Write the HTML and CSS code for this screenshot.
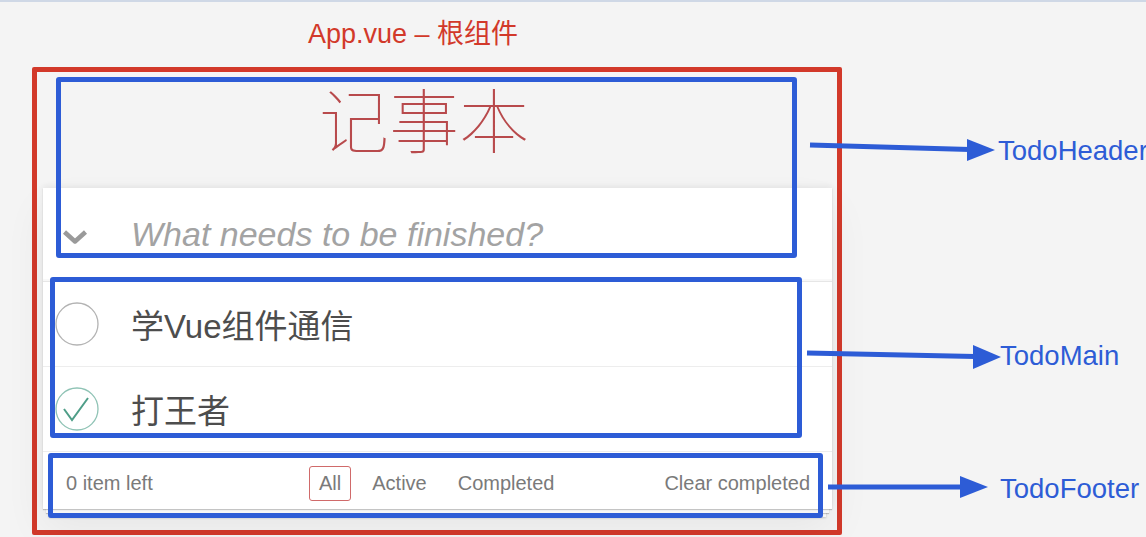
FILE: index.html
```html
<!DOCTYPE html>
<html lang="zh-CN">
<head>
  <meta charset="UTF-8">
  <meta name="viewport" content="width=device-width, initial-scale=1.0">
  <title>App.vue – 根组件</title>
  <link rel="stylesheet" href="styles.css">
</head>
<body>
  <div class="diagram">
    <div class="topline"></div>
    <div class="root-label">App.vue – 根组件</div>

    <div class="app-frame">
      <header class="todo-header">
        <h1>记事本</h1>
      </header>

      <section class="todoapp">
        <div class="new-row">
          <svg class="toggle-all" width="26" height="16" viewBox="0 0 26 16">
            <polyline points="2.5,3 13,12.5 23.5,3" fill="none" stroke="#9a9a9a" stroke-width="4.5" stroke-linejoin="round"/>
          </svg>
          <input class="new-todo" placeholder="What needs to be finished?">
        </div>

        <ul class="todo-list">
          <li>
            <svg class="check" width="44" height="44" viewBox="0 0 44 44">
              <circle cx="22" cy="22" r="21" fill="none" stroke="#b3b3b3" stroke-width="1.3"/>
            </svg>
            <label>学Vue组件通信</label>
          </li>
          <li class="completed">
            <svg class="check" width="44" height="44" viewBox="0 0 44 44">
              <circle cx="22" cy="22" r="21" fill="none" stroke="#8fc3b5" stroke-width="1.3"/>
              <polyline points="9,22 17,33 33,11" fill="none" stroke="#4f9e88" stroke-width="2"/>
            </svg>
            <label>打王者</label>
          </li>
        </ul>

        <footer class="footer">
          <span class="count">0 item left</span>
          <ul class="filters">
            <li><a class="selected">All</a></li>
            <li><a>Active</a></li>
            <li><a>Completed</a></li>
          </ul>
          <button class="clear">Clear completed</button>
        </footer>
      </section>
    </div>

    <!-- component annotations -->
    <div class="mark mark-header"></div>
    <div class="mark mark-main"></div>
    <div class="mark mark-footer"></div>

    <svg class="arrows" width="1146" height="537" viewBox="0 0 1146 537">
      <g fill="#2d5cd6" stroke="#2d5cd6">
        <line x1="810" y1="145" x2="970" y2="149.5" stroke-width="5"/>
        <polygon points="967,139 995,150 967,161" stroke="none"/>
        <line x1="807" y1="353" x2="975" y2="356.5" stroke-width="5"/>
        <polygon points="973,345 1001,357 973,369" stroke="none"/>
        <line x1="828" y1="487" x2="962" y2="487" stroke-width="5"/>
        <polygon points="960,476 988,487 960,498" stroke="none"/>
      </g>
    </svg>

    <span class="tag tag-header">TodoHeader</span>
    <span class="tag tag-main">TodoMain</span>
    <span class="tag tag-footer">TodoFooter</span>
  </div>
</body>
</html>
```

FILE: styles.css
```css
body {
  margin: 0;
  background-color: #f4f4f4;
  font-family: "Liberation Sans", "Noto Sans CJK SC", sans-serif;
}
.diagram {
  position: relative;
  width: 1146px;
  height: 537px;
  overflow: hidden;
}
.topline {
  height: 2px;
  background-color: #cfd8e6;
}
.root-label {
  height: 46px;
  padding: 19px 0 0 308px;
  font-size: 27px;
  line-height: 27px;
  color: #d2392a;
}

/* red frame = App.vue */
.app-frame {
  box-sizing: border-box;
  width: 810px;
  height: 468px;
  margin-left: 32px;
  padding: 0 5px 0 6px;
  border: 5px solid #d2392a;
  border-radius: 2px;
}
.todo-header {
  height: 116px;
}
.todo-header h1 {
  margin: 0;
  padding: 11px 27px 0 0;
  text-align: center;
  font-family: "Noto Sans CJK SC", sans-serif;
  font-size: 70px;
  font-weight: 100;
  line-height: 70px;
  color: #b84a4c;
}

.todoapp {
  background-color: #fff;
  box-shadow: 0 1px 1px rgba(0, 0, 0, 0.2),
              0 7px 0 -3px #f6f6f6,
              0 8px 1px -3px rgba(0, 0, 0, 0.2),
              0 14px 0 -6px #f6f6f6,
              0 15px 2px -6px rgba(0, 0, 0, 0.2),
              0 -2px 6px rgba(0, 0, 0, 0.06),
              0 20px 40px rgba(0, 0, 0, 0.06);
}
.new-row {
  display: flex;
  align-items: center;
  height: 93px;
  border-bottom: 1px solid #e6e6e6;
  box-shadow: inset 0 -2px 1px rgba(0, 0, 0, 0.03);
}
.toggle-all {
  margin: 4px 43px 0 19px;
}
.new-todo {
  flex: 1;
  border: none;
  outline: none;
  background: transparent;
  padding: 0;
  font-family: inherit;
  font-size: 34px;
  font-style: italic;
  color: #4d4d4d;
}
.new-todo::placeholder {
  color: #a3a3a3;
}

.todo-list {
  margin: 0;
  padding: 0;
  list-style: none;
}
.todo-list li {
  display: flex;
  align-items: center;
  height: 84px;
  border-bottom: 1px solid #ededed;
}
.todo-list .check {
  margin: 0 32px 0 12px;
}
.todo-list label {
  font-size: 33px;
  color: #4d4d4d;
}

.footer {
  display: flex;
  align-items: center;
  box-sizing: border-box;
  height: 57px;
  padding: 5px 22px 0 23px;
  font-size: 20px;
  color: #7a7a7a;
}
.count {
  width: 243px;
}
.filters {
  display: flex;
  margin: 0;
  padding: 0;
  list-style: none;
}
.filters a {
  display: block;
  margin-right: 11px;
  padding: 6px 9px;
  line-height: 21px;
  border: 1px solid transparent;
  border-radius: 3px;
}
.filters a.selected {
  border-color: #d06a6a;
}
.clear {
  margin-left: auto;
  padding: 0;
  border: none;
  background: none;
  font-family: inherit;
  font-size: 20px;
  color: #7a7a7a;
}

/* annotation overlays */
.mark {
  position: absolute;
  box-sizing: border-box;
  border: 5px solid #2d5cd6;
  border-radius: 3px;
}
.mark-header {
  left: 56px;
  top: 77px;
  width: 741px;
  height: 181px;
}
.mark-main {
  left: 50px;
  top: 277px;
  width: 752px;
  height: 161px;
}
.mark-footer {
  left: 48px;
  top: 453px;
  width: 775px;
  height: 65px;
}
.arrows {
  position: absolute;
  left: 0;
  top: 0;
}
.tag {
  position: absolute;
  font-size: 27.5px;
  line-height: 28px;
  color: #2d5cd6;
  white-space: nowrap;
}
.tag-header {
  left: 998px;
  top: 137px;
}
.tag-main {
  left: 1000px;
  top: 342px;
}
.tag-footer {
  left: 1000px;
  top: 475px;
}
```
